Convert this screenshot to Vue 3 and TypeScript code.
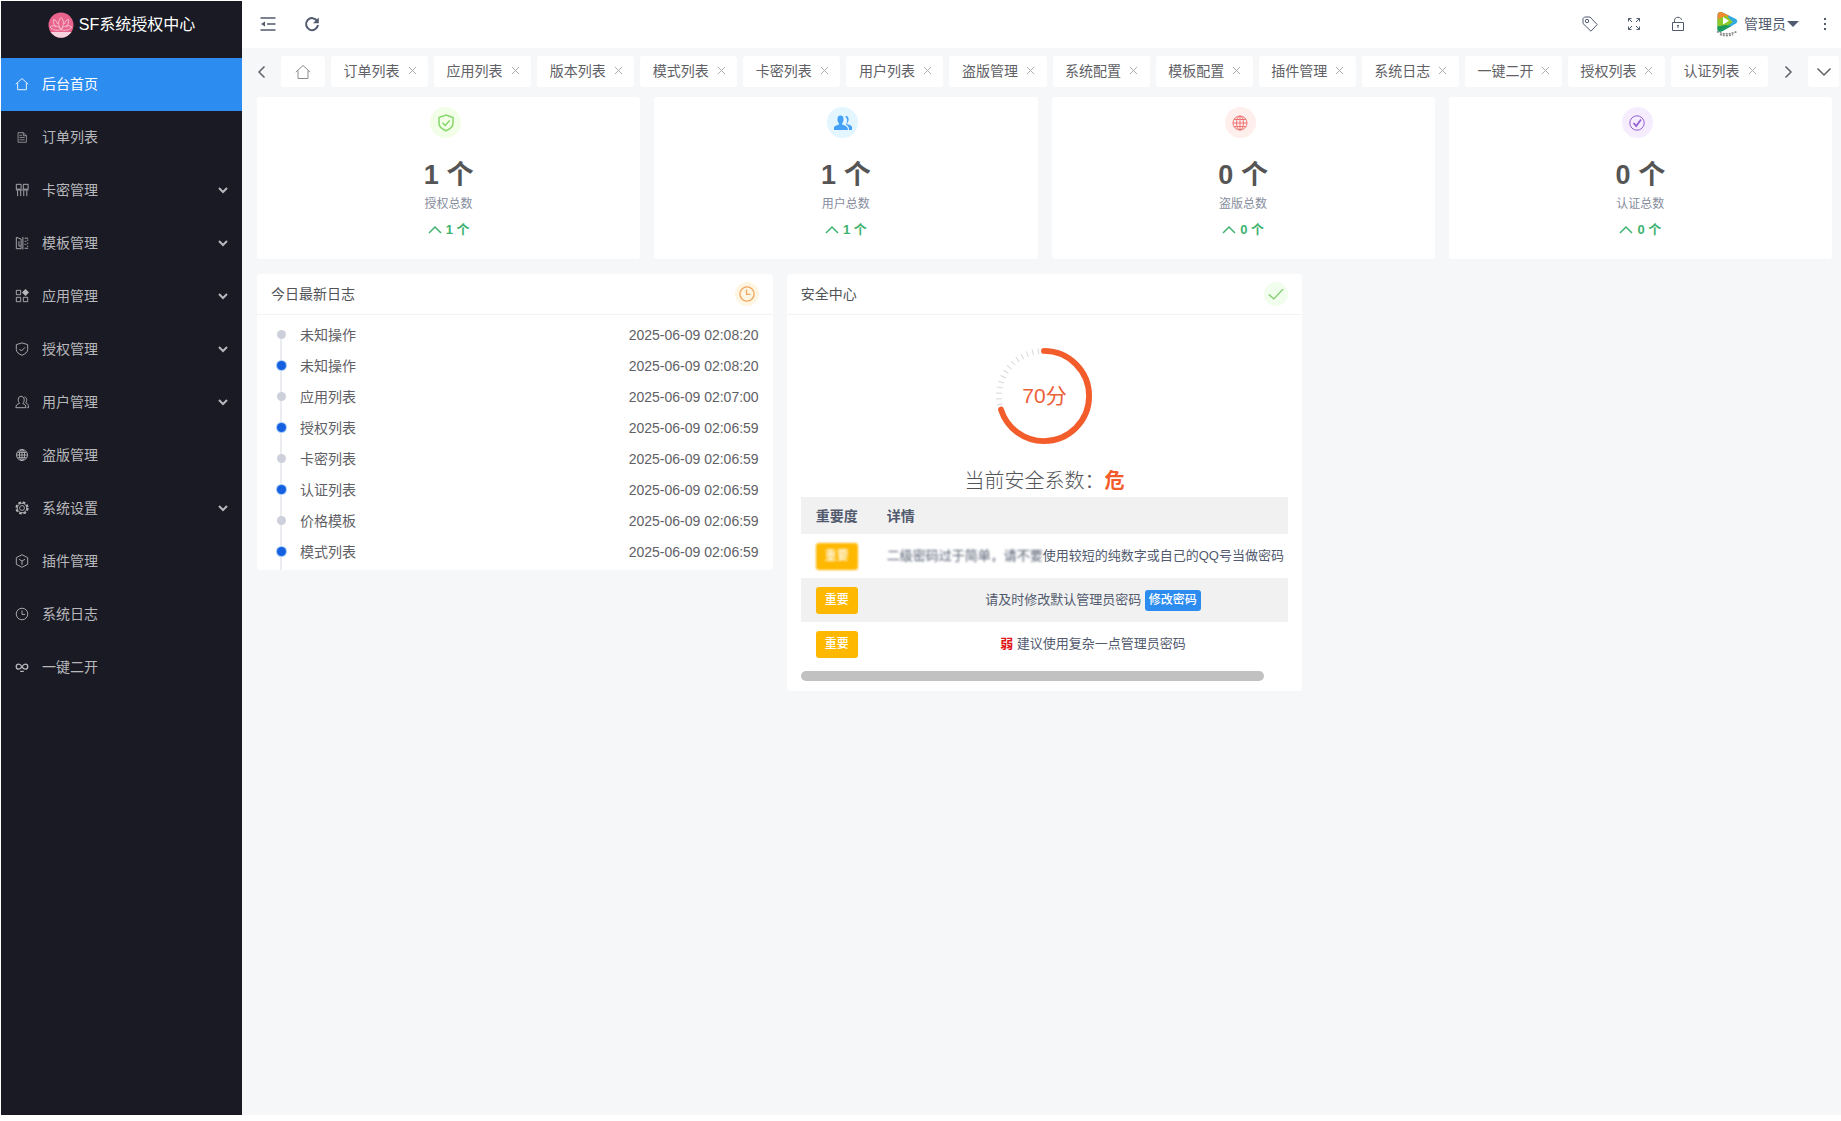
<script setup lang="ts">
import { computed } from 'vue'

interface MenuItem {
  icon: string
  label: string
  children?: boolean
  active?: boolean
}

interface Stat {
  icon: string
  tone: string
  value: number
  label: string
}

interface LogEntry {
  name: string
  time: string
}

const menu: MenuItem[] = [
  { icon: 'home', label: '后台首页', active: true },
  { icon: 'doc', label: '订单列表' },
  { icon: 'card', label: '卡密管理', children: true },
  { icon: 'template', label: '模板管理', children: true },
  { icon: 'apps', label: '应用管理', children: true },
  { icon: 'shield', label: '授权管理', children: true },
  { icon: 'user', label: '用户管理', children: true },
  { icon: 'globe', label: '盗版管理' },
  { icon: 'gear', label: '系统设置', children: true },
  { icon: 'cube', label: '插件管理' },
  { icon: 'clock', label: '系统日志' },
  { icon: 'infinity', label: '一键二开' },
]

const tabs: string[] = [
  '订单列表', '应用列表', '版本列表', '模式列表', '卡密列表', '用户列表', '盗版管理',
  '系统配置', '模板配置', '插件管理', '系统日志', '一键二开', '授权列表', '认证列表',
]

const stats: Stat[] = [
  { icon: 'shield', tone: 'green', value: 1, label: '授权总数' },
  { icon: 'users', tone: 'blue', value: 1, label: '用户总数' },
  { icon: 'globe', tone: 'red', value: 0, label: '盗版总数' },
  { icon: 'check', tone: 'purple', value: 0, label: '认证总数' },
]

const logs: LogEntry[] = [
  { name: '未知操作', time: '2025-06-09 02:08:20' },
  { name: '未知操作', time: '2025-06-09 02:08:20' },
  { name: '应用列表', time: '2025-06-09 02:07:00' },
  { name: '授权列表', time: '2025-06-09 02:06:59' },
  { name: '卡密列表', time: '2025-06-09 02:06:59' },
  { name: '认证列表', time: '2025-06-09 02:06:59' },
  { name: '价格模板', time: '2025-06-09 02:06:59' },
  { name: '模式列表', time: '2025-06-09 02:06:59' },
]

const score = 70
const ringLength = 2 * Math.PI * 46
const ringDash = computed(() => `${(ringLength * score) / 100} ${ringLength}`)
const tickCount = 50
const ticks = Array.from({ length: tickCount }, (_, i) => (i * 360) / tickCount)
  .filter((angle) => angle > (score * 360) / 100)
</script>

<template>
  <div class="layout">
    <aside class="sidebar">
      <div class="brand">
        <svg class="brand-logo" viewBox="0 0 26 26" aria-hidden="true">
          <circle cx="13" cy="13" r="12.5" fill="#e8638d" />
          <path d="M2.500 20h21a12.500 12.500 0 0 1-21 0z" fill="#f8d3dd" />
          <g fill="none" stroke="#f9bccd" stroke-width="1">
            <path d="M13 5.500c-3 3-3.500 7 0 12 3.500-5 3-9 0-12z" />
            <path d="M9.500 12C9 9.500 7.500 8 5.500 7.500c-.5 3 .5 6 2.500 8M16.500 12c.5-2.500 2-4 4-4.500.5 3-.5 6-2.500 8" />
            <path d="M13 17.500c-2-3.500-7-5-11-2.500 2.500 3.500 8 4 11 2.500 3 1.500 8.500 1 11-2.500-4-2.500-9-1-11 2.500z" />
          </g>
        </svg>
        <span>SF系统授权中心</span>
      </div>
      <nav>
        <a v-for="item in menu" :key="item.label" href="#" class="menu-item" :class="{ active: item.active }">
          <svg class="menu-icon" viewBox="0 0 16 16" aria-hidden="true">
            <path v-if="item.icon === 'home'" d="M.8 8.300 8 1.800 15.200 8.300M3 7v7.500h10V7" />
            <g v-else-if="item.icon === 'doc'" opacity=".8"><path d="M3.500 3h6l3.500 3.500v7.500H3.500zM9.500 3v3.500H13M5 6h3M5 8.500h6M5 11.200h6" /></g>
            <path v-else-if="item.icon === 'card'" d="M1.500 1.500H7v5.500H1.500zM9.500 1.500H15v5.500H9.500zM3 8.500V15M6.500 8.500V15M10 8.500V15M13.500 8.500V15M1 8h14.500" />
            <path v-else-if="item.icon === 'template'" d="M1.500 1.500v13M1.500 1.500 7 3.500v11H1.500M4.500 6v5.500h2M9 1v14.500M11 2.500h4M11 6h2M11 9.500h2M11 14h4M14.500 4v1.500M14.500 7.500V9M14.500 11v1.500" />
            <g v-else-if="item.icon === 'apps'">
              <path d="M1.500 1.500H6.500v5H1.500zM1.500 9.500H6.500v5H1.500zM9.500 9.500h5v5h-5z" />
              <path class="solid" d="m12 0 4 4-4 4-4-4z" />
            </g>
            <path v-else-if="item.icon === 'shield'" d="M8 1 14.500 3v5.500c0 3.200-3 5.300-6.500 6.700-3.500-1.400-6.500-3.500-6.500-6.700V3zM5 8l2.300 2.300L11.500 6" />
            <path v-else-if="item.icon === 'user'" d="M5 9C3 7.500 3 1.500 7 1.500s4.500 6 2 7.500v.8c2 .5 3.500 1.700 3.500 4.700H1c0-3 1.500-4.200 4-4.700zM10.800 2.300c3.200.3 3.200 4.700 1.400 6.500 1.800.7 3.300 2 3.300 5.700h-1.500" />
            <g v-else-if="item.icon === 'globe'">
              <circle cx="8" cy="8" r="6.300" />
              <ellipse cx="8" cy="8" rx="3" ry="6.300" />
              <path d="M2 8h12M8 2v12M3 5h10M3 11h10" />
            </g>
            <g v-else-if="item.icon === 'gear'">
              <circle cx="8" cy="8" r="6.500" stroke-width="2" stroke-dasharray="3.100 2.005" />
              <circle cx="8" cy="8" r="5.400" />
              <circle cx="8" cy="8" r="2.800" />
            </g>
            <path v-else-if="item.icon === 'cube'" d="M8 .8 14.500 4.200v7.600L8 15.200 1.500 11.800V4.200zM4.500 6 8 8l3.500-2M8 8v4.500" />
            <g v-else-if="item.icon === 'clock'"><circle cx="8" cy="8" r="6.600" /><path d="M8 4v4.500h3.500" /></g>
            <path v-else stroke-width="1.500" d="M8 8C6.500 5.500 5.500 4.800 4.200 4.800a2.800 2.800 0 0 0 0 5.600c1.600 0 2.500-.9 3.800-2.900s2.200-2.700 3.800-2.700a2.800 2.800 0 0 1 0 5.600c-1.200 0-2.300-.5-3.800-2.400M6 13h4" />
          </svg>
          <span>{{ item.label }}</span>
          <svg v-if="item.children" class="menu-arrow" viewBox="0 0 10 8" aria-hidden="true">
            <path d="m1 2 4 4 4-4" />
          </svg>
        </a>
      </nav>
    </aside>

    <main class="main">
      <header class="topbar">
        <button type="button" class="tool" aria-label="收起菜单">
          <svg viewBox="0 0 16 16" stroke-width="1.500"><path d="M.5 2h15M7 8h8.500M.5 14h15" /><path d="M1 8l4-2.500v5z" fill="currentColor" stroke="none" /></svg>
        </button>
        <button type="button" class="tool" aria-label="刷新">
          <svg viewBox="0 0 16 16" stroke-width="2"><path d="M13.200 5A6 6 0 1 0 14 9" /><path d="M14.800 1.500v5.800H9z" fill="currentColor" stroke="none" /></svg>
        </button>
        <div class="spacer"></div>
        <button type="button" class="tool" aria-label="标签">
          <svg viewBox="0 0 16 16"><path d="M1 2.500 2.500 1H8l7.200 7.500L9 15.200 1 7.500z" /><circle cx="5" cy="5" r="1.700" /></svg>
        </button>
        <button type="button" class="tool" aria-label="全屏">
          <svg viewBox="0 0 16 16"><path d="M2.500 5.500v-3h3M2.500 2.500l3.500 3.500M10.500 2.500h3v3M13.500 2.500 10 6M2.500 10.500v3h3M2.500 13.500 6 10M10.500 13.500h3v-3M13.500 13.500 10 10" /></svg>
        </button>
        <button type="button" class="tool" aria-label="锁屏">
          <svg viewBox="0 0 16 16"><path d="M2.500 6.500h11v8h-11zM4.500 6.500V4.300C4.500 2.500 6 1.300 8 1.300s3.200 1 3.500 2.500M8 9v3M7 9.500h2" /></svg>
        </button>
        <button type="button" class="account">
          <svg class="avatar" viewBox="0 0 22 26" aria-hidden="true">
            <path d="M1.500 4C1.500 1.500 3.500.3 6 1.200L19 7.500c3 1.500 3 4 0 5.600L6.500 20c-3 1.500-5 .5-5-2z" fill="#2fa9e0" />
            <path d="M1.500 4C1.500 1.500 3.500.3 6 1.200L13 4.600 9.500 10h-8z" fill="#f08a2c" />
            <path d="M1.500 8.500 10 4.500l7 6.500L7 18c-3 1.500-5.500 1-5.500-1z" fill="#8cc926" />
            <path d="M1.500 15.500 9 14l6.500 1-9 5c-3 1.500-5 .5-5-2z" fill="#1c9a5b" />
            <path d="M7 6 13 9.800 7 13.500z" fill="#fff" />
            <path d="M1 20.500c6 3 13 3 20 0M4 23.500c4 1.500 9 1.500 13 0" fill="none" stroke="#888" stroke-width="1.500" stroke-dasharray="2 1" />
          </svg>
          <span>管理员</span>
          <i class="caret"></i>
        </button>
        <button type="button" class="more" aria-label="更多"><i></i><i></i><i></i></button>
      </header>

      <div class="tabbar">
        <button type="button" class="scroll-btn" aria-label="向左">
          <svg viewBox="0 0 16 16"><path d="m10.500 2.500-5.500 5.500 5.500 5.500" /></svg>
        </button>
        <a href="#" class="tab-home" aria-label="首页">
          <svg viewBox="0 0 16 16"><path d="M.8 8 8 1.500 15.200 8M3 6.500V14.500h10V6.500" /></svg>
        </a>
        <div class="tabs">
          <div v-for="tab in tabs" :key="tab" class="tab">
            <a href="#">{{ tab }}</a>
            <button type="button" :aria-label="'关闭' + tab">
              <svg viewBox="0 0 10 10"><path d="m1 1 8 8M9 1 1 9" /></svg>
            </button>
          </div>
        </div>
        <button type="button" class="scroll-btn next" aria-label="向右">
          <svg viewBox="0 0 16 16"><path d="m5.500 2.500 5.500 5.500-5.500 5.500" /></svg>
        </button>
        <button type="button" class="tab-menu" aria-label="标签操作">
          <svg viewBox="0 0 16 16"><path d="m1.500 4.500 6.500 6.500 6.500-6.500" /></svg>
        </button>
      </div>

      <div class="content">
        <section class="stats">
          <article v-for="stat in stats" :key="stat.label" class="stat">
            <div class="stat-icon" :class="stat.tone">
              <svg viewBox="0 0 18 18" aria-hidden="true">
                <path v-if="stat.icon === 'shield'" stroke-width="1.500" d="M9 1 16 3.500v5.800c0 3.700-3.200 5.900-7 7.400-3.800-1.500-7-3.700-7-7.400V3.500zM5.500 8.800 8.200 11.500 12.700 6.500" />
                <g v-else-if="stat.icon === 'users'" fill="currentColor" stroke="none">
                  <path d="M12 2c3.500 0 3 5.500 1.200 7.300v1C16 11 19 12 19 16h-4c0-3-1-4.500-3-5.300 1.500-2.500 1.800-6-.8-8.200z" />
                  <path d="M6.500 1.500c4 0 3.500 6 1.500 8v1c3 .8 6 2 6 5.500H-1c0-3.500 3-4.700 6-5.500v-1c-2-2-2.500-8 1.500-8z" />
                </g>
                <g v-else-if="stat.icon === 'globe'">
                  <circle cx="9" cy="9" r="7" /><ellipse cx="9" cy="9" rx="3.500" ry="7" />
                  <path d="M2 9h14M9 2v14M3 5.500h12M3 12.500h12" />
                </g>
                <g v-else><circle cx="9" cy="9" r="7.200" /><path stroke-width="1.800" d="m5.500 9 2.700 3L13 5.500" /></g>
              </svg>
            </div>
            <strong class="stat-value">{{ stat.value }} 个</strong>
            <span class="stat-label">{{ stat.label }}</span>
            <span class="stat-trend">
              <svg viewBox="0 0 14 14" aria-hidden="true"><path d="m1 10 6-6 6 6" /></svg>
              {{ stat.value }} 个
            </span>
          </article>
        </section>

        <section class="panels">
          <article class="panel">
            <header class="panel-head">
              <h2>今日最新日志</h2>
              <span class="head-icon orange">
                <svg viewBox="0 0 18 18" aria-hidden="true"><circle cx="9" cy="9" r="8" /><path d="M8.500 4v5.500h4.500" /></svg>
              </span>
            </header>
            <ul class="timeline">
              <li v-for="(log, i) in logs" :key="i">
                <i class="dot" :class="{ on: i % 2 === 1 }"></i>
                <span>{{ log.name }}</span>
                <time>{{ log.time }}</time>
              </li>
            </ul>
          </article>

          <article class="panel">
            <header class="panel-head">
              <h2>安全中心</h2>
              <span class="head-icon lime">
                <svg viewBox="0 0 18 18" aria-hidden="true"><path d="m1 9.500 5.500 5L17 3.500" /></svg>
              </span>
            </header>
            <div class="security">
              <div class="ring">
                <svg viewBox="0 0 100 100" aria-hidden="true">
                  <line v-for="angle in ticks" :key="angle" x1="50" y1="1" x2="50" y2="7" stroke="#d8d8d8" :transform="`rotate(${angle} 50 50)`" />
                  <circle cx="50" cy="50" r="46" fill="none" stroke="#f35c2b" stroke-width="6" stroke-linecap="round" :stroke-dasharray="ringDash" transform="rotate(-90 50 50)" />
                </svg>
                <span>{{ score }}分</span>
              </div>
              <p class="level">当前安全系数：<b>危</b></p>
              <div class="table-wrap">
                <table>
                  <colgroup><col class="col-level" /><col /></colgroup>
                  <thead>
                    <tr><th scope="col">重要度</th><th scope="col">详情</th></tr>
                  </thead>
                  <tbody>
                    <tr>
                      <td><span class="badge hazy">重要</span></td>
                      <td class="long"><span class="hazy">二级密码过于简单，请不要</span>使用较短的纯数字或自己的QQ号当做密码</td>
                    </tr>
                    <tr>
                      <td><span class="badge">重要</span></td>
                      <td>请及时修改默认管理员密码 <button type="button" class="mini">修改密码</button></td>
                    </tr>
                    <tr>
                      <td><span class="badge">重要</span></td>
                      <td><b class="weak">弱</b> 建议使用复杂一点管理员密码</td>
                    </tr>
                  </tbody>
                </table>
              </div>
              <div class="scrollbar"><i></i></div>
            </div>
          </article>
        </section>
      </div>
    </main>
  </div>
</template>

<style>
body {
  background: #fff;
}
</style>

<style scoped>
* {
  box-sizing: border-box;
}

.layout {
  display: flex;
  min-height: calc(100vh - 6px);
  padding: 1px 0 0 1px;
  font: 14px/20px "Liberation Sans", "Noto Sans CJK SC", sans-serif;
  color: #5f6166;
}

svg {
  display: block;
  fill: none;
  stroke: currentColor;
}

a {
  color: inherit;
  text-decoration: none;
}

button {
  padding: 0;
  border: 0;
  background: none;
  color: inherit;
  font: inherit;
  cursor: pointer;
}

.sidebar {
  flex: none;
  width: 241px;
  background: #191a23;
  color: #b8b8bc;
}

.brand {
  display: flex;
  align-items: center;
  justify-content: center;
  gap: 5px;
  height: 57px;
  padding-bottom: 10px;
  color: #fff;
  font-size: 16px;
}

.brand-logo {
  width: 26px;
  height: 26px;
  stroke: none;
}

.menu-item {
  display: flex;
  align-items: center;
  height: 53px;
  padding: 0 14px 2px;
}

.menu-item.active {
  background: #2d8cf0;
  color: #fff;
}

.menu-icon {
  width: 14px;
  height: 14px;
  margin-right: 13px;
}

.menu-icon .solid {
  fill: currentColor;
  stroke: none;
}

.menu-arrow {
  width: 10px;
  height: 8px;
  margin-left: auto;
  stroke-width: 2;
}

.main {
  flex: 1;
  min-width: 0;
  background: #f5f7f9;
}

.topbar {
  display: flex;
  align-items: center;
  height: 47px;
  padding: 0 8px 1px 4px;
  background: #fff;
  color: #515a6e;
}

.tool {
  display: grid;
  place-items: center;
  width: 44px;
  height: 46px;
}

.tool svg {
  width: 16px;
  height: 16px;
}

.spacer {
  flex: 1;
}

.account {
  display: flex;
  align-items: center;
  height: 46px;
  padding: 0 18px 0 16px;
}

.avatar {
  width: 22px;
  height: 26px;
  margin-right: 6px;
  stroke: none;
}

.caret {
  margin-left: 1px;
  border: 6px solid transparent;
  border-top-color: #515a6e;
  border-bottom: 0;
}

.more {
  display: grid;
  justify-items: center;
  gap: 3px;
  width: 16px;
}

.more i {
  width: 2px;
  height: 2px;
  background: #515a6e;
}

.tabbar {
  display: flex;
  padding: 8px 2px 10px 0;
}

.scroll-btn {
  display: grid;
  place-items: center;
  width: 39px;
}

.scroll-btn.next {
  width: 40px;
}

.scroll-btn svg,
.tab-menu svg {
  width: 16px;
  height: 16px;
  stroke-width: 1.5;
}

.tab-home,
.tab-menu,
.tab {
  display: flex;
  align-items: center;
  justify-content: center;
  height: 31px;
  border-radius: 3px;
  background: #fff;
}

.tab-home {
  width: 44px;
  margin-right: 6px;
  color: #8c8c8c;
}

.tab-home svg {
  width: 16px;
  height: 16px;
}

.tab-menu {
  width: 31px;
}

.tabs {
  display: flex;
  flex: 1;
  gap: 6px;
  min-width: 0;
}

.tab {
  flex: 1;
  gap: 8px;
  padding: 0 0 2px 1px;
  white-space: nowrap;
}

.tab svg {
  width: 9px;
  height: 9px;
  color: #a5a5a5;
}

.content {
  display: grid;
  gap: 15px;
  padding: 0 9px 15px 15px;
}

.stats {
  display: grid;
  grid-template-columns: repeat(4, 1fr);
  gap: 14px;
}

.stat {
  display: flex;
  flex-direction: column;
  align-items: center;
  height: 162px;
  padding-top: 10px;
  border-radius: 3px;
  background: #fff;
}

.stat-icon {
  display: grid;
  place-items: center;
  width: 31px;
  height: 31px;
  margin: 0 6px 18px 0;
  border-radius: 50%;
}

.stat-icon svg {
  width: 18px;
  height: 18px;
}

.green {
  background: #f3fee9;
  color: #86d86a;
}

.blue {
  background: #e3f5ff;
  color: #45a1f8;
}

.red {
  background: #feeeec;
  color: #ee7474;
}

.purple {
  background: #f5ecfe;
  color: #9462cf;
}

.stat-value {
  color: #555;
  font-size: 27px;
  line-height: 38px;
}

.stat-label {
  color: #868d9c;
  font-size: 12px;
}

.stat-trend {
  display: flex;
  align-items: center;
  gap: 4px;
  margin-top: 6px;
  color: #3eb370;
  font-size: 13px;
  font-weight: 700;
}

.stat-trend svg {
  width: 14px;
  height: 14px;
  stroke-width: 1.5;
}

.panels {
  display: grid;
  grid-template-columns: repeat(3, 1fr);
  align-items: start;
  gap: 14px;
}

.panel {
  min-width: 0;
  border-radius: 3px;
  background: #fff;
}

.panel-head {
  display: flex;
  align-items: center;
  justify-content: space-between;
  height: 41px;
  padding: 0 14px;
  border-bottom: 1px solid #f3f3f3;
}

.panel-head h2 {
  margin: 0;
  color: #515357;
  font-size: 14px;
  font-weight: 400;
}

.head-icon {
  display: grid;
  place-items: center;
  width: 24px;
  height: 24px;
  border-radius: 50%;
}

.head-icon svg {
  width: 16px;
  height: 16px;
  stroke-width: 1.5;
}

.orange {
  background: #fff5e3;
  color: #efa862;
}

.lime {
  background: #f2feed;
  color: #7ccb6c;
}

.timeline {
  height: 255px;
  margin: 0;
  padding: 4px 14px 0 17px;
  overflow: hidden;
  list-style: none;
}

.timeline li {
  display: flex;
  align-items: center;
  height: 31px;
  background: linear-gradient(#ebecef, #ebecef) 6px 0 / 2px 100% no-repeat;
}

.timeline li:first-child {
  background-position: 6px 15px;
}

.timeline li:last-child {
  height: 34px;
  padding-bottom: 3px;
}

.dot {
  width: 9px;
  height: 9px;
  margin: 0 14px 0 3px;
  border-radius: 50%;
  background: #cdd0da;
}

.dot.on {
  background: #1460e0;
  box-shadow: 0 0 0 1px #a5ccf8;
}

.timeline time {
  margin-left: auto;
}

.security {
  padding: 32px 14px 10px;
}

.ring {
  position: relative;
  width: 98px;
  height: 98px;
  margin: 0 auto;
}

.ring svg {
  width: 98px;
  height: 98px;
}

.ring span {
  position: absolute;
  inset: 0;
  display: grid;
  place-items: center;
  color: #ec6037;
  font-size: 21px;
}

.level {
  margin: 22px 0 1px;
  color: #515357;
  font-size: 20px;
  font-weight: 300;
  line-height: 29px;
  text-align: center;
}

.level b {
  color: #f35c2b;
  font-weight: 700;
}

.table-wrap {
  overflow: hidden;
}

table {
  width: calc(100% + 26px);
  border-collapse: collapse;
  table-layout: fixed;
  color: #515a6e;
}

.col-level {
  width: 71px;
}

th {
  height: 37px;
  padding: 0 15px;
  background: #f1f1f1;
  text-align: left;
  white-space: nowrap;
}

td {
  height: 44px;
  padding: 0 15px;
  font-size: 13px;
  text-align: center;
  white-space: nowrap;
}

td.long {
  text-align: left;
}

tbody tr:nth-child(even) {
  background: #f1f1f1;
}

.badge {
  display: block;
  width: 42px;
  border-radius: 3px;
  background: #ffb800;
  color: #fff;
  font-size: 12px;
  font-weight: 500;
  line-height: 27px;
}

.hazy {
  filter: blur(1px);
}

.mini {
  height: 21px;
  padding: 0 4px;
  border-radius: 3px;
  background: #2d8cf0;
  color: #fff;
  font-size: 12px;
  font-weight: 500;
  line-height: 21px;
}

.weak {
  color: #e01414;
}

.scrollbar {
  margin-top: 5px;
}

.scrollbar i {
  display: block;
  width: 95%;
  height: 10px;
  border-radius: 5px;
  background: #c1c1c1;
}
</style>
